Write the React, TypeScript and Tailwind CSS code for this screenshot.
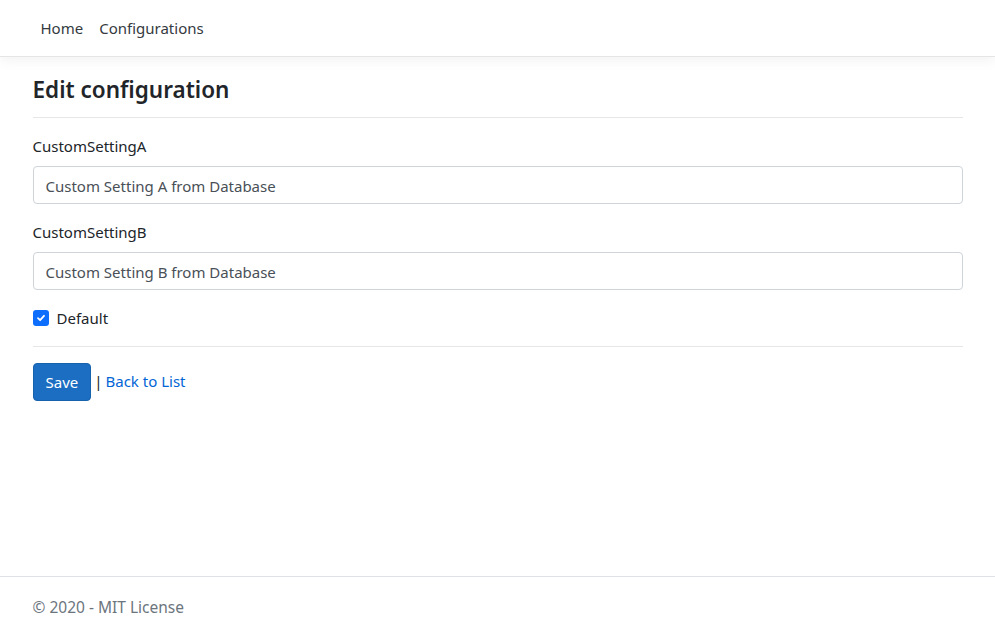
import React from "react";

export default function App() {
  return (
    <div
      className="min-h-screen flex flex-col bg-white text-[#212529] text-[16px] leading-6"
      style={{ fontFamily: '"Noto Sans", "Open Sans", sans-serif' }}
    >
      <header className="h-[57px] border-b border-[#e5e5e5] shadow-[0_4px_12px_rgba(0,0,0,0.05)] bg-white">
        <div className="w-[960px] mx-auto px-[15px] h-full flex items-center">
          <nav className="flex">
            <a className="px-2 py-2 text-[15px] text-[#343a40]">Home</a>
            <a className="px-2 py-2 text-[15px] text-[#343a40]">Configurations</a>
          </nav>
        </div>
      </header>
      <main className="flex-1">
        <div className="w-[960px] mx-auto px-[15px] pt-[18px]">
          <h1 className="text-[22.5px] leading-[29px] font-semibold text-[#212529]">Edit configuration</h1>
          <div className="mt-[13px] border-t border-[#e6e6e6]" />
          <form className="pt-[16px]">
            <label className="block text-[15px] leading-6 mb-2">CustomSettingA</label>
            <input
              className="block w-full h-[38px] px-3 pt-[1px] border border-[#ced4da] rounded-[4px] text-[15px] text-[#495057] outline-none"
              defaultValue="Custom Setting A from Database"
            />
            <label className="block text-[15px] leading-6 mb-2 mt-4">CustomSettingB</label>
            <input
              className="block w-full h-[38px] px-3 pt-[1px] border border-[#ced4da] rounded-[4px] text-[15px] text-[#495057] outline-none"
              defaultValue="Custom Setting B from Database"
            />
            <div className="mt-4 h-6 flex items-center">
              <span className="w-[16px] h-[16px] rounded-[3px] bg-[#0d6efd] flex items-center justify-center mr-[8px]">
                <svg width="10" height="10" viewBox="0 0 10 10">
                  <path d="M2 5.2 L4.1 7.2 L8 2.8" stroke="white" strokeWidth="1.8" fill="none" strokeLinecap="round" strokeLinejoin="round" />
                </svg>
              </span>
              <span className="text-[15px]">Default</span>
            </div>
          </form>
          <div className="mt-4 border-t border-[#e6e6e6]" />
          <div className="mt-4 flex items-center">
            <button className="h-[38px] px-3 rounded-[4px] bg-[#1b6ec2] border border-[#1861ac] text-white text-[15px]">
              Save
            </button>
            <span className="ml-[3px] text-[15px] -mt-[2px]">|</span>
            <a className="ml-[3px] text-[15px] text-[#0366d6] -mt-[2px]">Back to List</a>
          </div>
        </div>
      </main>
      <footer className="h-[61px] border-t border-[#dee2e6]">
        <div className="w-[960px] mx-auto px-[15px] leading-[60px] text-[15.5px] text-[#6c757d]">© 2020 - MIT License</div>
      </footer>
    </div>
  );
}
